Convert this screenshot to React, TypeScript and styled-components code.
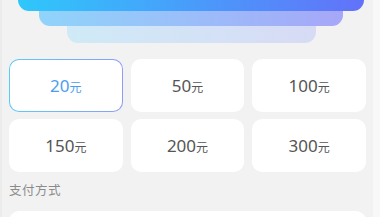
import React from "react";
import styled, { createGlobalStyle } from "styled-components";

const Global = createGlobalStyle`
  html, body { margin: 0; padding: 0; background: #f3f3f3; }
  body { font-family: "Noto Sans", "Noto Sans CJK SC", sans-serif; overflow: hidden; }
`;

const Page = styled.div`
  width: 380px;
  height: 217px;
  display: flex;
  overflow: hidden;
`;

const Main = styled.div`
  width: 373px;
  display: flex;
  flex-direction: column;
  background: #f2f2f2;
  border-left: 2px solid #ececec;
  box-sizing: border-box;
`;

const Strip = styled.div`
  width: 7px;
  background: #f8f8f8;
`;

const Stack = styled.div`
  display: flex;
  flex-direction: column;
  align-items: center;
  padding-left: 7px;
`;

const Layer = styled.div<{ $w: number; $h: number; $from: string; $to: string }>`
  width: ${(p) => p.$w}px;
  height: ${(p) => p.$h}px;
  border-radius: 0 0 11px 11px;
  background: linear-gradient(90deg, ${(p) => p.$from}, ${(p) => p.$to});
`;

const Grid = styled.div`
  display: grid;
  grid-template-columns: repeat(3, 1fr);
  column-gap: 8px;
  row-gap: 7px;
  margin: 16px 0 0 7px;
  width: 357px;
`;

const Amount = styled.div<{ $active?: boolean }>`
  height: 53px;
  box-sizing: border-box;
  border-radius: 10px;
  border: 1px solid transparent;
  background: ${(p) =>
    p.$active
      ? "linear-gradient(#fff, #fff) padding-box, linear-gradient(90deg, #5ccbf7, #8e9cf6) border-box"
      : "#fff"};
  display: flex;
  align-items: center;
  justify-content: center;
  color: ${(p) => (p.$active ? "#4a9ef0" : "#555")};
`;

const Num = styled.span`
  font-size: 17px;
  line-height: 1;
`;

const Unit = styled.span`
  font-size: 12px;
  line-height: 1;
  margin-top: 4px;
`;

const Label = styled.div`
  margin: 9px 0 0 7px;
  font-size: 12.5px;
  color: #8a8a8a;
  letter-spacing: 0.5px;
  height: 20px;
  line-height: 20px;
`;

const PayCard = styled.div`
  margin: 10px 0 0 7px;
  width: 357px;
  height: 50px;
  border-radius: 10px;
  background: #fff;
  display: flex;
  justify-content: flex-end;
  padding: 12px 14px 0 0;
  box-sizing: border-box;
`;

const Radio = styled.div`
  width: 18px;
  height: 18px;
  border-radius: 50%;
  background: #3b8ff2;
`;

const amounts = [20, 50, 100, 150, 200, 300];

export default function App() {
  return (
    <>
      <Global />
      <Page>
        <Main>
          <Stack>
            <Layer $w={346} $h={11} $from="#2fc7fb" $to="#6272f9" />
            <Layer $w={304} $h={15} $from="#90d4fa" $to="#a6a7f8" />
            <Layer $w={249} $h={17} $from="#cfeaf7" $to="#d7dbf5" />
          </Stack>
          <Grid>
            {amounts.map((a, i) => (
              <Amount key={a} $active={i === 0}>
                <Num>{a}</Num>
                <Unit>元</Unit>
              </Amount>
            ))}
          </Grid>
          <Label>支付方式</Label>
          <PayCard>
            <Radio />
          </PayCard>
        </Main>
        <Strip />
      </Page>
    </>
  );
}
